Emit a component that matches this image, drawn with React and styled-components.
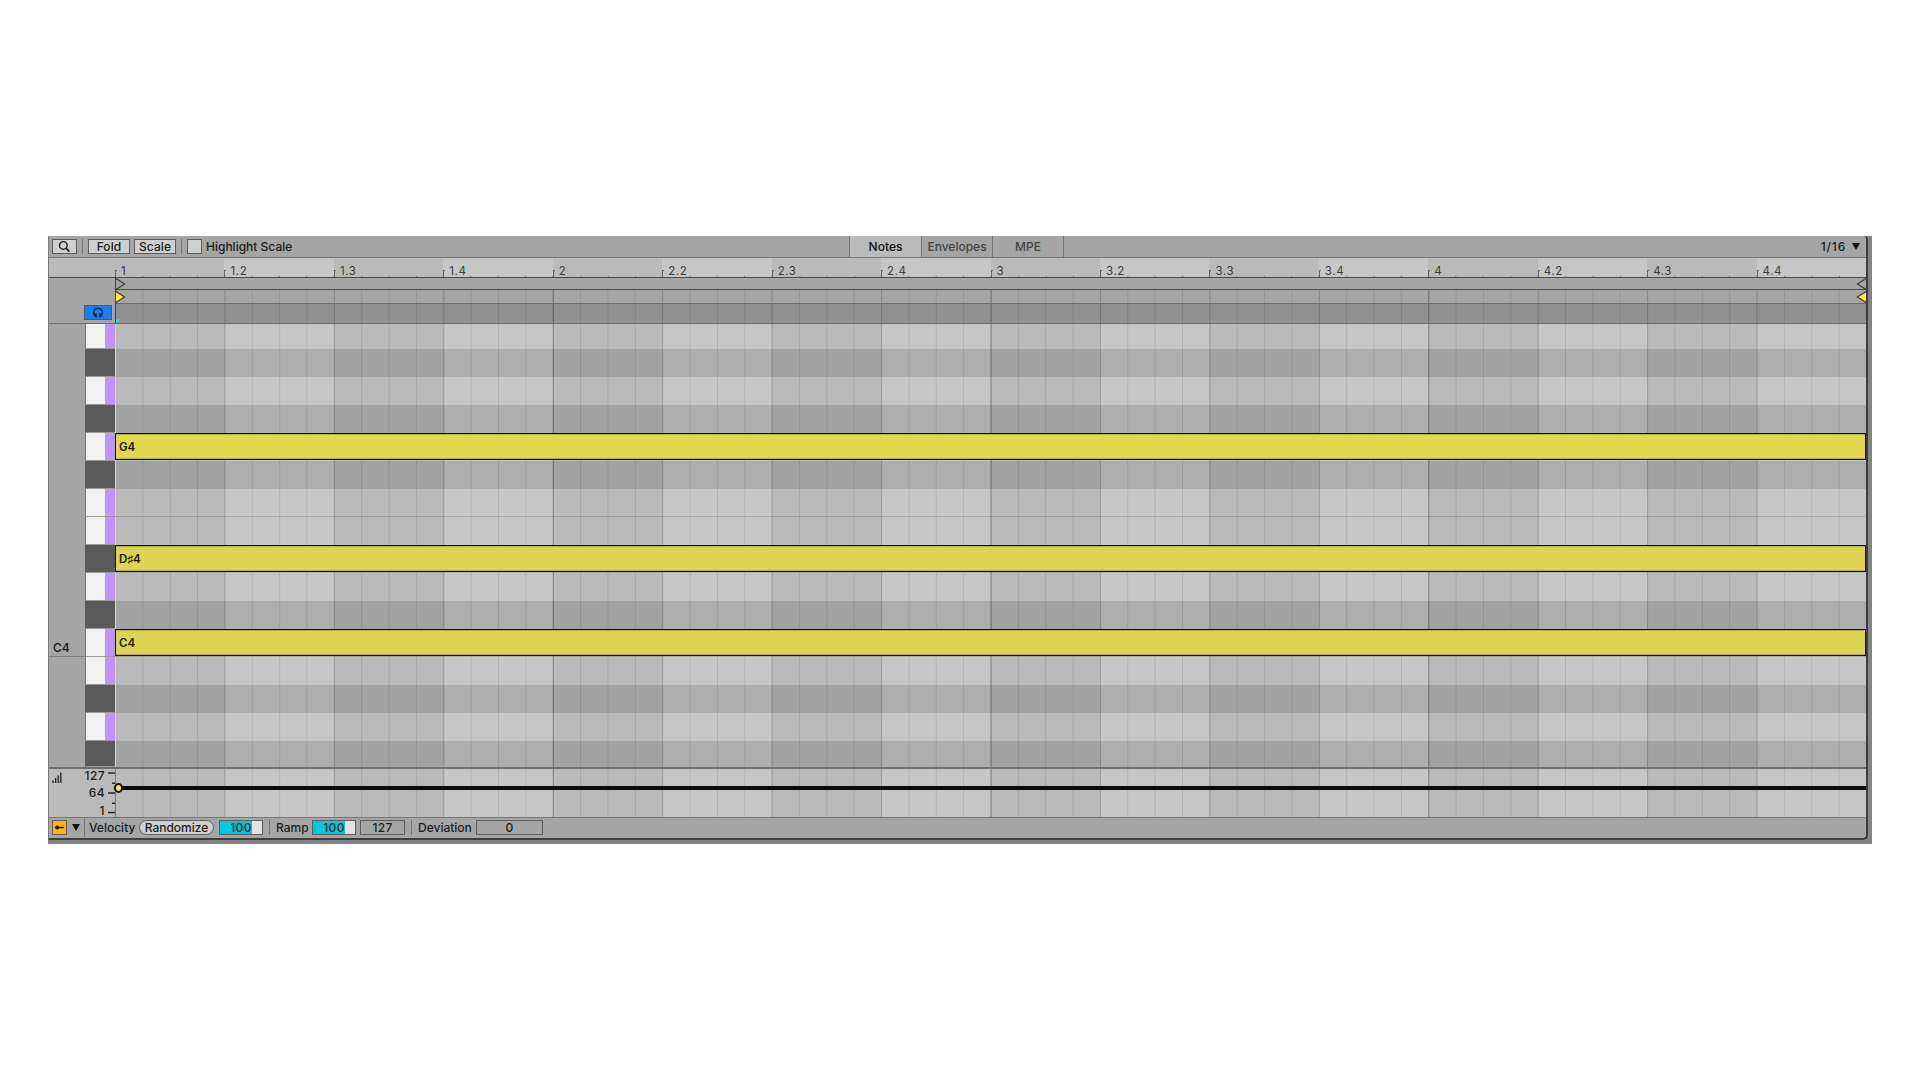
import styled, { createGlobalStyle, css } from "styled-components";

const GRID_WIDTH = 1751;
const BEAT = 109.45;
const STEP = BEAT / 4;

const beats = [];
for (let bar = 1; bar <= 4; bar++) {
  for (let beat = 1; beat <= 4; beat++) {
    beats.push(beat === 1 ? `${bar}` : `${bar}.${beat}`);
  }
}

// top to bottom, B4 down to G#3
const keys = [
  { name: "B4", height: 25 },
  { name: "A#4", height: 28, black: true },
  { name: "A4", height: 28 },
  { name: "G#4", height: 28, black: true },
  { name: "G4", height: 28, label: "G4", tone: "#e3d74e" },
  { name: "F#4", height: 28, black: true },
  { name: "F4", height: 28, line: true },
  { name: "E4", height: 28 },
  { name: "D#4", height: 28, black: true, label: "D♯4", tone: "#ded353" },
  { name: "D4", height: 28 },
  { name: "C#4", height: 28, black: true },
  { name: "C4", height: 28, label: "C4", tone: "#ded452", line: true },
  { name: "B3", height: 28 },
  { name: "A#3", height: 28, black: true },
  { name: "A3", height: 28 },
  { name: "G#3", height: 26, black: true },
];

export default function App() {
  return (
    <>
      <GlobalStyle />
      <Page>
        <Frame>
          <Editor>
            <Toolbar />
            <TimeRuler />
            <Markers />
            <PianoRoll />
            <VelocityLane />
            <Footer />
          </Editor>
        </Frame>
      </Page>
    </>
  );
}

const Toolbar = () => (
  <ToolbarRow>
    <ToolGroup>
      <ToolButton $width={25}>
        <svg width="13" height="13" viewBox="0 0 13 13" fill="none" stroke="#1c1c1c">
          <circle cx="5.3" cy="5.4" r="3.8" strokeWidth="1.4" />
          <path d="M8 8.2 11.4 11.6" strokeWidth="1.7" />
        </svg>
      </ToolButton>
      <Divider $left={5} $right={5} />
      <ToolButton $width={42}>Fold</ToolButton>
      <ToolButton $width={42} $left={4}>
        Scale
      </ToolButton>
      <Divider $left={5} $right={5} />
      <CheckBox />
      <Label $left={4}>Highlight Scale</Label>
    </ToolGroup>
    <Tabs>
      <Tab $width={72} $active>
        Notes
      </Tab>
      <Tab $width={71}>Envelopes</Tab>
      <Tab $width={71}>MPE</Tab>
    </Tabs>
    <GridSize>
      1/16
      <Triangle />
    </GridSize>
  </ToolbarRow>
);

const Triangle = () => (
  <svg width="8" height="7" viewBox="0 0 8 7">
    <path d="M0 0H8L4 7Z" fill="#111" />
  </svg>
);

const TimeRuler = () => (
  <RulerRow>
    <RulerGutter />
    {beats.map((beat, i) => (
      <Beat key={beat} $light={i % 2 === 1}>
        <BeatTick />
        <span>{beat}</span>
      </Beat>
    ))}
  </RulerRow>
);

const Markers = () => (
  <MarkerArea>
    <MarkerGutter>
      <PreviewButton>
        <svg width="12" height="12" viewBox="0 0 12 12" fill="none" stroke="#0b2440">
          <path d="M3.7 9.6C.6 7.6.9 1.3 6 1.3S11.4 7.6 8.3 9.6" strokeWidth="1.4" />
          <path d="M4 6.3V10.6M8 6.3V10.6" strokeWidth="1.5" />
        </svg>
      </PreviewButton>
    </MarkerGutter>
    <MarkerRows>
      <LoopBar>
        <MarkerArrow />
        <MarkerArrow $end />
      </LoopBar>
      <StartRow>
        <MarkerArrow $filled />
        <MarkerArrow $filled $end />
      </StartRow>
      <ScrubRow>
        <svg width="4" height="4" viewBox="0 0 4 4">
          <path d="M0 0H4L0 4Z" fill="#15e4f0" />
        </svg>
      </ScrubRow>
    </MarkerRows>
  </MarkerArea>
);

const MarkerArrow = ({ $filled, $end }) => (
  <svg width="10" height="12" viewBox="0 0 10 12">
    <path
      d={$end ? "M10 .6 1.4 6 10 11.4" : "M0 .6 8.6 6 0 11.4"}
      fill={$filled ? "#fff02a" : "none"}
      stroke="#3c3c3c"
      strokeWidth="1.2"
    />
  </svg>
);

const PianoRoll = () => (
  <Roll>
    <OctaveColumn>
      <Octave $height={333}>
        <Label>C4</Label>
      </Octave>
    </OctaveColumn>
    <Keyboard>
      {keys.map((key) => (
        <Key key={key.name} $height={key.height} $black={key.black} />
      ))}
    </Keyboard>
    <NoteGrid>
      {keys.map((key) => (
        <Lane key={key.name} $height={key.height} $black={key.black} $line={key.line}>
          {key.label && <Note $tone={key.tone}>{key.label}</Note>}
        </Lane>
      ))}
    </NoteGrid>
  </Roll>
);

const VelocityLane = () => (
  <Lanes>
    <LaneGutter>
      <svg width="10" height="12" viewBox="0 0 10 12" fill="none" stroke="#222">
        <path d="M1 8.5V11M3.6 6V11M6.2 3.5V11M8.8 .5V11" strokeWidth="1.3" />
      </svg>
      <Scale>
        <span>127</span>
        <span>64</span>
        <span>1</span>
      </Scale>
      <svg width="8" height="47" viewBox="0 0 8 47" stroke="#222">
        <path d="M1 4H8M1 24H8M1 43.5H8" strokeWidth="1.4" />
        <path d="M5 14.3H8M5 34.3H8" strokeWidth="1.4" />
      </svg>
    </LaneGutter>
    <VelocityGrid>
      <VelocityLine />
      <VelocityHandle />
    </VelocityGrid>
  </Lanes>
);

const Footer = () => (
  <FooterRow>
    <LaneToggle>
      <svg width="11" height="7" viewBox="0 0 11 7">
        <circle cx="3.2" cy="3.5" r="2" fill="#111" />
        <path d="M1.5 3.5H10" stroke="#111" strokeWidth="1.4" />
      </svg>
    </LaneToggle>
    <LaneMenu>
      <Triangle />
    </LaneMenu>
    <Label $left={4} $width={50}>
      Velocity
    </Label>
    <Pill>Randomize</Pill>
    <Field $width={44} $left={5} $fill>
      100
    </Field>
    <Divider $left={6} $right={6} />
    <Label $width={36}>Ramp</Label>
    <Field $width={44} $left={0} $fill>
      100
    </Field>
    <Field $width={45} $left={4}>
      127
    </Field>
    <Divider $left={6} $right={6} />
    <Label $width={58}>Deviation</Label>
    <Field $width={67} $left={0}>
      0
    </Field>
  </FooterRow>
);

const GlobalStyle = createGlobalStyle`
  * {
    box-sizing: border-box;
  }

  body {
    margin: 0;
    background: #fff;
  }

  svg {
    display: block;
    flex: none;
  }
`;

const gridLines = css`
  background-image: linear-gradient(90deg, #0000002e 1px, transparent 1px),
    linear-gradient(90deg, #00000018 1px, transparent 1px),
    linear-gradient(90deg, #0000001a 1px, transparent 1px);
  background-size: ${BEAT * 4}px 100%, ${BEAT}px 100%, ${STEP}px 100%;
`;

const beatShade = css`
  background-image: linear-gradient(90deg, #0000002e 1px, transparent 1px),
    linear-gradient(90deg, #00000018 1px, transparent 1px),
    linear-gradient(90deg, #0000001a 1px, transparent 1px),
    linear-gradient(90deg, #bababa 50%, #c6c6c6 50%);
  background-size: ${BEAT * 4}px 100%, ${BEAT}px 100%, ${STEP}px 100%,
    ${BEAT * 2}px 100%;
`;

const Page = styled.main`
  width: 1920px;
  height: 1080px;
  padding: 236px 48px;
  font-family: "Inter", sans-serif;
  font-size: 12px;
  font-weight: 500;
  color: #1c1c1c;
  overflow: hidden;
`;

const Frame = styled.div`
  width: 1824px;
  height: 608px;
  padding-right: 4px;
  background: #848484;
`;

const Editor = styled.section`
  width: 1820px;
  height: 604px;
  display: flex;
  flex-direction: column;
  background: #a5a5a5;
  border-left: 1px solid #7c7c7c;
  border-right: 2px solid #3e3e3e;
  border-bottom: 2px solid #3e3e3e;
  border-radius: 0 4px 5px 0;
  overflow: hidden;

  > * {
    flex-shrink: 0;
  }
`;

const ToolbarRow = styled.header`
  height: 22px;
  display: grid;
  grid-template-columns: 800px 215px 1fr;
  border-bottom: 1px solid #777;
`;

const ToolGroup = styled.div`
  display: flex;
  align-items: center;
  padding: 0 0 0 3px;
`;

const ToolButton = styled.button`
  width: ${(p) => p.$width}px;
  height: 15px;
  margin: 0 0 0 ${(p) => p.$left || 0}px;
  padding: 0;
  display: flex;
  align-items: center;
  justify-content: center;
  background: #cfcfcf;
  border: 1px solid #5e5e5e;
  color: inherit;
  font: inherit;
  letter-spacing: 0.1px;
`;

const Divider = styled.div`
  width: 1px;
  height: 15px;
  margin: 0 ${(p) => p.$right}px 0 ${(p) => p.$left}px;
  background: #787878;
`;

const CheckBox = styled.div`
  width: 15px;
  height: 15px;
  background: #cfcfcf;
  border: 1px solid #5e5e5e;
`;

const Label = styled.span`
  width: ${(p) => (p.$width ? `${p.$width}px` : "auto")};
  margin-left: ${(p) => p.$left || 0}px;
  line-height: 15px;
  white-space: nowrap;
`;

const Tabs = styled.nav`
  display: flex;
  border-left: 1px solid #777;
`;

const Tab = styled.div`
  width: ${(p) => p.$width}px;
  display: flex;
  align-items: center;
  justify-content: center;
  border-right: 1px solid #777;
  background: ${(p) => (p.$active ? "#bababa" : "transparent")};
  color: ${(p) => (p.$active ? "#111" : "#444")};
`;

const GridSize = styled.div`
  display: flex;
  align-items: center;
  justify-content: flex-end;
  gap: 6px;
  padding: 0 6px 0 0;
  letter-spacing: 0.8px;
`;

const RulerRow = styled.div`
  height: 20px;
  display: flex;
  border-bottom: 1px solid #4c4c4c;
  background: #bababa;
`;

const RulerGutter = styled.div`
  width: 66px;
  flex: none;
`;

const Beat = styled.div`
  width: ${BEAT}px;
  flex: none;
  display: flex;
  align-items: flex-end;
  gap: 4px;
  background: linear-gradient(90deg, #666 1px, transparent 1px) 0 100% /
    ${STEP}px 1px repeat-x ${(p) => (p.$light ? "#c6c6c6" : "#bababa")};
  color: #3c3c3c;
  font-size: 11.5px;
  font-weight: 400;
  letter-spacing: 0.6px;
  line-height: 12px;
`;

const BeatTick = styled.i`
  width: 2px;
  height: 7px;
  border-top: 1px solid #666;
  border-left: 1px solid #666;
`;

const MarkerArea = styled.div`
  height: 46px;
  display: flex;
  border-bottom: 1px solid #6c6c6c;
`;

const MarkerGutter = styled.div`
  width: 66px;
  display: flex;
  align-items: flex-end;
  padding: 0 0 3px 35px;
`;

const PreviewButton = styled.div`
  width: 28px;
  height: 15px;
  display: flex;
  align-items: center;
  justify-content: center;
  background: #1a7df0;
  border: 1px solid #4d5a68;
`;

const MarkerRows = styled.div`
  width: ${GRID_WIDTH}px;
  border-left: 1px solid #3c3c3c;
`;

const LoopBar = styled.div`
  height: 12px;
  display: flex;
  justify-content: space-between;
  border-bottom: 1px solid #4c4c4c;
`;

const StartRow = styled.div`
  height: 14px;
  display: flex;
  justify-content: space-between;
  padding-top: 1px;
  border-bottom: 1px solid #6c6c6c;
  background-position: -1px 0;
  ${gridLines}
`;

const ScrubRow = styled.div`
  height: 19px;
  display: flex;
  align-items: flex-end;
  background-color: #919191;
  background-position: -1px 0;
  ${gridLines}
`;

const Roll = styled.div`
  height: 443px;
  display: flex;
`;

const OctaveColumn = styled.div`
  width: 36px;
`;

const Octave = styled.div`
  height: ${(p) => p.$height}px;
  display: flex;
  align-items: flex-end;
  padding: 0 0 1px 4px;
  border-bottom: 1px solid #7c7c7c;
`;

const Keyboard = styled.div`
  width: 30px;
`;

const Key = styled.div`
  height: ${(p) => p.$height}px;
  background: ${(p) =>
    p.$black
      ? "#5a5a5a"
      : "linear-gradient(90deg, #f1f1f1 19px, #bd95fd 19px)"};
  border-left: 1px solid ${(p) => (p.$black ? "#5a5a5a" : "#777")};
  border-bottom: 1px solid #9a9a9a;
`;

const NoteGrid = styled.div`
  width: ${GRID_WIDTH}px;
  background-color: #bababa;
  ${beatShade}
`;

const Lane = styled.div`
  height: ${(p) => p.$height}px;
  background: ${(p) => (p.$black ? "#00000020" : "transparent")};
  border-left: 1px solid #c4dede;
  border-bottom: ${(p) => (p.$line ? "1px solid #00000020" : "none")};
`;

const Note = styled.div`
  height: 27px;
  margin-left: -1px;
  padding-left: 3px;
  display: flex;
  align-items: center;
  background: ${(p) => p.$tone};
  border: 1px solid #111;
  box-shadow: inset 0 1px #00000030, inset 0 -1px #00000030;
  color: #1a1a08;
  font-size: 11.5px;
  font-weight: 600;
`;

const Lanes = styled.div`
  height: 51px;
  display: flex;
  border-top: 2px solid #6e6e6e;
  border-bottom: 1px solid #777;
`;

const LaneGutter = styled.div`
  width: 66px;
  display: flex;
  justify-content: space-between;
  padding-left: 3px;
  background: #bababa;

  > svg:first-child {
    margin-top: 3px;
  }
`;

const Scale = styled.div`
  flex: 1;
  display: flex;
  flex-direction: column;
  align-items: flex-end;
  padding-right: 2px;
  line-height: 17.4px;
  letter-spacing: 0.4px;
  margin-top: -2px;
`;

const VelocityGrid = styled.div`
  width: ${GRID_WIDTH}px;
  position: relative;
  background-color: #bababa;
  ${beatShade}
`;

const VelocityLine = styled.div`
  height: 4px;
  margin-top: 17px;
  background: #0c0c08;
`;

const VelocityHandle = styled.div`
  position: absolute;
  left: -1px;
  top: 14px;
  width: 9px;
  height: 10px;
  border: 2px solid #111;
  border-radius: 50%;
  background: #fff02a;
`;

const FooterRow = styled.footer`
  height: 20px;
  display: flex;
  align-items: center;
  padding: 0 0 1px 3px;
`;

const LaneToggle = styled.div`
  width: 15px;
  height: 15px;
  display: flex;
  align-items: center;
  justify-content: center;
  background: #ffb400;
  border: 1px solid #5e5e5e;
`;

const LaneMenu = styled.div`
  width: 18px;
  height: 19px;
  display: flex;
  align-items: center;
  justify-content: center;
  border-right: 1px solid #777;
`;

const Pill = styled.button`
  width: 75px;
  height: 15px;
  padding: 0;
  margin: 0;
  background: #cfcfcf;
  border: 1px solid #5e5e5e;
  border-radius: 8px;
  color: inherit;
  font: inherit;
  line-height: 12px;
`;

const Field = styled.div`
  width: ${(p) => p.$width}px;
  height: 15px;
  margin-left: ${(p) => p.$left}px;
  border: 1px solid #5e5e5e;
  background: ${(p) =>
    p.$fill ? "linear-gradient(90deg, #00c8de 77%, #e2e2e2 77%)" : "transparent"};
  letter-spacing: 0.3px;
  line-height: 13px;
  text-align: center;
`;
